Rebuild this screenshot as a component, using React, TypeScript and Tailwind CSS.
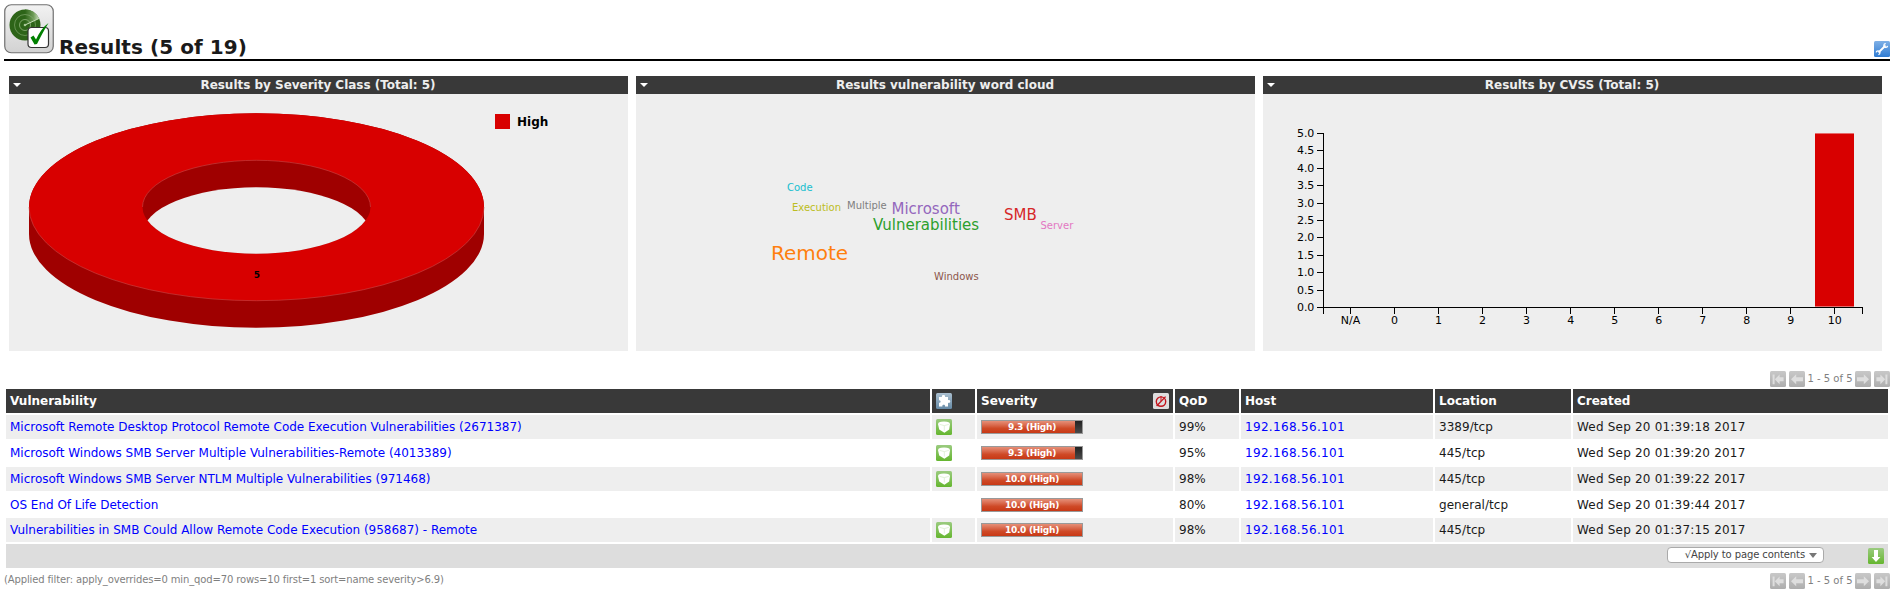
import React from "react";

const results = [
  { name: "Microsoft Remote Desktop Protocol Remote Code Execution Vulnerabilities (2671387)", fix: true, sev: 9.3, qod: "99%", loc: "3389/tcp", created: "Wed Sep 20 01:39:18 2017" },
  { name: "Microsoft Windows SMB Server Multiple Vulnerabilities-Remote (4013389)", fix: true, sev: 9.3, qod: "95%", loc: "445/tcp", created: "Wed Sep 20 01:39:20 2017" },
  { name: "Microsoft Windows SMB Server NTLM Multiple Vulnerabilities (971468)", fix: true, sev: 10, qod: "98%", loc: "445/tcp", created: "Wed Sep 20 01:39:22 2017" },
  { name: "OS End Of Life Detection", fix: false, sev: 10, qod: "80%", loc: "general/tcp", created: "Wed Sep 20 01:39:44 2017" },
  { name: "Vulnerabilities in SMB Could Allow Remote Code Execution (958687) - Remote", fix: true, sev: 10, qod: "98%", loc: "445/tcp", created: "Wed Sep 20 01:37:15 2017" },
];

const words = [
  { text: "Code", x: 151, y: 97, size: 10, color: "#17becf" },
  { text: "Execution", x: 156, y: 117, size: 10, color: "#bcbd22" },
  { text: "Multiple", x: 211, y: 115, size: 10, color: "#7f7f7f" },
  { text: "Microsoft", x: 255.5, y: 120, size: 15, color: "#9467bd" },
  { text: "Vulnerabilities", x: 237, y: 136, size: 15, color: "#2ca02c" },
  { text: "SMB", x: 368, y: 126, size: 15, color: "#d62728" },
  { text: "Server", x: 404.5, y: 135, size: 10, color: "#e377c2" },
  { text: "Remote", x: 135, y: 166, size: 20, color: "#ff7f0e" },
  { text: "Windows", x: 298, y: 186, size: 10, color: "#8c564b" },
];

const cvssLabels = ["N/A", "0", "1", "2", "3", "4", "5", "6", "7", "8", "9", "10"];
const GRID = "grid grid-cols-[924px_43px_196px_64px_192px_136px_315px] gap-[2px]";

function ResultsLogo() {
  return (
    <svg width="50" height="50" viewBox="0 0 50 50" className="shrink-0">
      <defs>
        <linearGradient id="tile" x1="0" y1="0" x2="0" y2="1">
          <stop offset="0" stopColor="#f2f2f2" />
          <stop offset="1" stopColor="#d2d2d2" />
        </linearGradient>
        <linearGradient id="sweep" x1="0" y1="0.4" x2="1" y2="0.4">
          <stop offset="0" stopColor="#2d6418" />
          <stop offset="0.6" stopColor="#6f9c58" />
          <stop offset="1" stopColor="#c9dcbd" />
        </linearGradient>
      </defs>
      <rect x="0.75" y="0.75" width="48.5" height="48" rx="6.5" fill="url(#tile)" stroke="#707070" strokeWidth="1.2" />
      <circle cx="21" cy="21" r="15.5" fill="#2d6418" />
      <path d="M21 21 L21 5.5 A15.5 15.5 0 0 1 35 14.5 Z" fill="url(#sweep)" />
      <g fill="none" stroke="#86ac72" strokeWidth="0.9">
        <circle cx="21" cy="21" r="5.5" />
        <circle cx="21" cy="21" r="10.5" strokeOpacity="0.7" />
      </g>
      <path d="M21 21 L35 14.5" stroke="#c5dcb7" strokeWidth="1" />
      <circle cx="21" cy="21" r="1.3" fill="#a8c796" />
      <rect x="24" y="23.5" width="20.5" height="20" rx="3.5" fill="#fff" stroke="#333" strokeWidth="1.2" />
      <path d="M26.5 33.5 L29.5 31.5 L32 35.5 C35 29 39 23 44.5 19 C40 26 36 34 33 40 L30.5 40.5 Z" fill="#008000" />
    </svg>
  );
}

function WrenchIcon() {
  return (
    <svg width="16" height="16" viewBox="0 0 16 16">
      <defs>
        <linearGradient id="blue" x1="0" y1="0" x2="0" y2="1">
          <stop offset="0" stopColor="#7fb0e6" />
          <stop offset="1" stopColor="#2f7cd3" />
        </linearGradient>
      </defs>
      <rect width="16" height="16" rx="1.5" fill="url(#blue)" />
      <path d="M4.5 11.5 L11.5 4.5" stroke="#fff" strokeWidth="1.8" />
      <path d="M11.8 2.6 A1.9 1.9 0 1 0 13.6 4.8 M2.2 11.4 A1.9 1.9 0 1 1 4.4 13.6" fill="none" stroke="#fff" strokeWidth="1.3" />
    </svg>
  );
}

function PuzzleIcon() {
  return (
    <svg width="16" height="16" viewBox="0 0 16 16">
      <defs>
        <linearGradient id="steel" x1="0" y1="0" x2="0" y2="1">
          <stop offset="0" stopColor="#abc0d0" />
          <stop offset="1" stopColor="#668aa6" />
        </linearGradient>
      </defs>
      <rect width="16" height="16" rx="1.5" fill="url(#steel)" />
      <path d="M3 4 H6 C5 1.4 10 1.4 9 4 H12 V7.2 C15 6.2 15 10.8 12 9.8 V13.5 H9 C9.8 11.2 5.6 11.2 6.4 13.5 H3 V9.8 C5.2 10.4 5.2 6.8 3 7.4 Z" fill="#fff" />
    </svg>
  );
}

function SolutionIcon() {
  return (
    <svg width="16" height="16" viewBox="0 0 16 16">
      <defs>
        <linearGradient id="green" x1="0" y1="0" x2="0" y2="1">
          <stop offset="0" stopColor="#9bcb80" />
          <stop offset="1" stopColor="#65b62f" />
        </linearGradient>
      </defs>
      <rect width="16" height="16" rx="1.5" fill="url(#green)" />
      <path d="M2 5 Q2 3.4 5 2.8 Q8 2.2 11 2.8 Q14 3.4 14 5 L13.2 10.4 L8.4 13.8 L3.2 10.4 Z" fill="#fff" />
      <path d="M3.6 5.4 L8.3 6.6 L12.8 5.4 M8.3 6.8 V11.5" fill="none" stroke="#cfe8c0" strokeWidth="0.6" />
    </svg>
  );
}

function OverrideIcon() {
  return (
    <svg width="16" height="16" viewBox="0 0 16 16">
      <rect width="16" height="16" rx="1.5" fill="#dedede" />
      <circle cx="8" cy="8.6" r="4.7" fill="none" stroke="#c4141c" strokeWidth="1.4" />
      <path d="M3.6 13 L12.6 3.6" stroke="#c4141c" strokeWidth="1.3" />
      <path d="M8 3 V8" stroke="#c4141c" strokeWidth="1" />
    </svg>
  );
}

function DownloadIcon() {
  return (
    <svg width="16" height="16" viewBox="0 0 16 16">
      <rect width="16" height="16" rx="1.5" fill="url(#green)" />
      <path d="M6 2 H10 V9 H12.4 L8 14 L3.6 9 H6 Z" fill="#fff" />
    </svg>
  );
}

function PagerIcon({ flip, end }: { flip?: boolean; end?: boolean }) {
  return (
    <svg width="16" height="16" viewBox="0 0 16 16" className={flip ? "-scale-x-100" : ""}>
      <defs>
        <linearGradient id="gray" x1="0" y1="0" x2="0" y2="1">
          <stop offset="0" stopColor="#c8c8c8" />
          <stop offset="1" stopColor="#aeaeae" />
        </linearGradient>
      </defs>
      <rect width="16" height="16" rx="1.5" fill="url(#gray)" />
      {end ? (
        <path d="M2.6 3.4 H4.6 V13.2 H2.6 Z M4.8 8.3 L9.6 3.4 V6.3 H13.6 V10.3 H9.6 V13.2 Z" fill="#dedede" />
      ) : (
        <path d="M2 8.3 L7.2 3.3 V6.3 H14 V10.3 H7.2 V13.3 Z" fill="#dedede" />
      )}
    </svg>
  );
}

function Pager() {
  return (
    <div className="flex h-4 items-center text-[10px] leading-4 text-[#7f7f7f]">
      <PagerIcon end />
      <span className="w-[3px]" />
      <PagerIcon />
      <span className="w-[50px] text-center whitespace-nowrap">1 - 5 of 5</span>
      <PagerIcon flip />
      <span className="w-[3px]" />
      <PagerIcon flip end />
    </div>
  );
}

function Panel({ title, children }: { title: string; children: React.ReactNode }) {
  return (
    <section className="w-[619px] bg-[#eeeeee]">
      <header className="flex h-[18px] items-center bg-[#393939] pl-1 text-xs font-bold text-[#eeeeee]">
        <svg width="8" height="4" viewBox="0 0 8 4">
          <path d="M0 0 H8 L4 4 Z" fill="#fff" />
        </svg>
        <h2 className="flex-1 pr-[13px] text-center leading-[18px] tracking-[-0.02px]">{title}</h2>
      </header>
      <svg width="619" height="257" className="block">{children}</svg>
    </section>
  );
}

function SeverityChart() {
  return (
    <>
      <path d="M20 113 A227.5 93.7 0 0 1 475 113 V140 A227.5 93.7 0 0 1 20 140 Z" fill="#9f0000" />
      <ellipse cx="247.5" cy="113" rx="227.5" ry="93.7" fill="#d80000" />
      <path d="M20 113 A227.5 93.7 0 0 0 475 113" fill="none" stroke="#c84848" strokeWidth="0.6" />
      <clipPath id="hole">
        <ellipse cx="247.5" cy="113" rx="114" ry="46.7" />
      </clipPath>
      <ellipse cx="247.5" cy="113" rx="114" ry="46.7" fill="#9f0000" />
      <ellipse cx="247.5" cy="140" rx="114" ry="46.7" fill="#eeeeee" clipPath="url(#hole)" />
      <path d="M133.5 113 A114 46.7 0 0 1 361.5 113" fill="none" stroke="#c84848" strokeWidth="0.6" />
      <text x="248" y="184" textAnchor="middle" className="text-[9px] font-bold">5</text>
      <rect x="486" y="20" width="15" height="15" fill="#d80000" />
      <text x="508" y="32" className="text-[12px] font-bold">High</text>
    </>
  );
}

function CvssChart() {
  return (
    <>
      <g className="text-[11px]" fill="#000">
        {Array.from({ length: 11 }, (_, i) => (
          <g key={i}>
            <rect x="54" y={Math.round(213 - i * 17.4)} width="7" height="1" />
            <text x="51" y={Math.round(213 - i * 17.4) + 4} textAnchor="end" className="tracking-[-0.2px]">{(i / 2).toFixed(1)}</text>
          </g>
        ))}
        {cvssLabels.map((label, i) => (
          <g key={label}>
            <rect x={Math.round(87 + i * 44.03)} y="213" width="1" height="7" />
            <text x={87.5 + i * 44.03} y="230" textAnchor="middle">{label}</text>
          </g>
        ))}
        <rect x="60" y="39" width="1" height="181" />
        <rect x="60" y="213" width="540" height="1" />
        <rect x="599" y="213" width="1" height="7" />
      </g>
      <rect x="552" y="39" width="39" height="174" fill="#e56b6b" />
      <rect x="552" y="40" width="39" height="172" fill="#d80000" />
    </>
  );
}

function SeverityBar({ value }: { value: number }) {
  return (
    <div className="grid h-[14px] w-[102px] border border-[#999] bg-linear-to-b from-[#222] to-[#4a4a4a]">
      <div className="col-start-1 row-start-1 bg-linear-to-b from-[#e58f78] via-[#cf4a27] via-60% to-[#c83814]" style={{ width: `${value * 10}%` }} />
      <span className="col-start-1 row-start-1 text-center text-[9px] leading-[12px] font-bold tracking-[-0.28px] text-white">{value.toFixed(1)} (High)</span>
    </div>
  );
}

export default function App() {
  return (
    <div className="h-[594px] w-[1898px] overflow-hidden bg-white font-['DejaVu_Sans',sans-serif] text-xs text-[#1a1a1a]">
      <header className="mr-2 ml-1 flex h-[61px] items-start border-b-2 border-black pt-1">
        <ResultsLogo />
        <h1 className="mt-[31px] ml-[5px] flex-1 text-[20px] leading-6 font-bold tracking-[0.07px]">Results (5 of 19)</h1>
        <div className="mt-[37px]"><WrenchIcon /></div>
      </header>

      <main>
        <div className="mt-[15px] ml-[9px] flex gap-2">
          <Panel title="Results by Severity Class (Total: 5)"><SeverityChart /></Panel>
          <Panel title="Results vulnerability word cloud">
            {words.map((w) => (
              <text key={w.text} x={w.x} y={w.y} fill={w.color} fontSize={w.size}>{w.text}</text>
            ))}
          </Panel>
          <Panel title="Results by CVSS (Total: 5)"><CvssChart /></Panel>
        </div>

        <div className="mt-5 mr-2 flex justify-end"><Pager /></div>

        <div className="mt-[2px] ml-[6px] flex w-[1882px] flex-col gap-[2px]">
          <div className={`${GRID} h-6 font-bold text-white *:flex *:items-center *:bg-[#393939] *:px-1`}>
            <div>Vulnerability</div>
            <div><PuzzleIcon /></div>
            <div className="justify-between">Severity <OverrideIcon /></div>
            <div>QoD</div>
            <div>Host</div>
            <div>Location</div>
            <div>Created</div>
          </div>
          {results.map((r, i) => (
            <div key={r.name} className={`${GRID} ${r.fix ? "h-6" : "h-[23px]"} *:flex *:items-center *:px-1 ${i % 2 ? "" : "*:bg-[#eeeeee]"}`}>
              <div><a className="tracking-[-0.015px] text-[#0000ff]">{r.name}</a></div>
              <div>{r.fix && <SolutionIcon />}</div>
              <div><SeverityBar value={r.sev} /></div>
              <div>{r.qod}</div>
              <div><a className="tracking-[0.32px] text-[#0000ff]">192.168.56.101</a></div>
              <div className="tracking-[0.05px]">{r.loc}</div>
              <div className="tracking-[0.2px]">{r.created}</div>
            </div>
          ))}
          <div className="flex h-6 items-start justify-end bg-[#dddddd] pt-[3px] pr-1">
            <div className="mr-11 flex h-4 w-[157px] items-center justify-end rounded-[4px] border border-[#aaa] bg-white pr-[6px] text-[10px] text-[#444]">
              <span className="mr-1 leading-3 tracking-[-0.1px] whitespace-nowrap">√Apply to page contents</span>
              <svg width="8" height="5" viewBox="0 0 8 5"><path d="M0 0 H8 L4 5 Z" fill="#777" /></svg>
            </div>
            <div className="pt-px"><DownloadIcon /></div>
          </div>
        </div>

        <footer className="mt-[5px] mr-2 ml-1 flex justify-between text-[10px] text-[#7f7f7f]">
          <span className="leading-[14px] tracking-[-0.135px]">(Applied filter: apply_overrides=0 min_qod=70 rows=10 first=1 sort=name severity&gt;6.9)</span>
          <Pager />
        </footer>
      </main>
    </div>
  );
}
